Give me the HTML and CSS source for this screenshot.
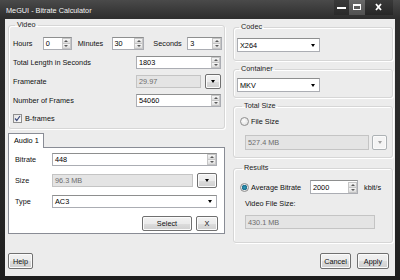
FILE: index.html
```html
<!DOCTYPE html>
<html>
<head>
<meta charset="utf-8">
<link rel="stylesheet" href="styles.css">
</head>
<body>
<div class="window">
  <div class="titlebar">
    <div class="title">MeGUI - Bitrate Calculator</div>
    <div class="caption-btns">
      <div class="cbtn cmin"><svg width="15" height="15" viewBox="0 0 15 15"><rect x="3" y="7" width="9" height="2" fill="#fff"/></svg></div>
      <div class="cbtn cmax"><svg width="16" height="15" viewBox="0 0 16 15"><rect x="4.5" y="4.5" width="7" height="5" fill="none" stroke="#fff"/><rect x="4" y="4" width="8" height="2" fill="#fff"/></svg></div>
      <div class="cbtn cclose"><svg width="28" height="15" viewBox="0 0 28 15"><path d="M11 4 L16 10 M16 4 L11 10" stroke="#fff" stroke-width="1.8" fill="none"/></svg></div>
    </div>
  </div>
  <div class="client">
    <div class="main">
      <div class="col-left">
        <fieldset class="group video">
          <legend>Video</legend>
          <div class="row">
            <span class="lbl l-hours">Hours</span>
            <div class="box w-hours"><span class="val">0</span><span class="spin"><i class="up"></i><i class="dn"></i></span></div>
            <span class="lbl l-min">Minutes</span>
            <div class="box w-min"><span class="val">30</span><span class="spin"><i class="up"></i><i class="dn"></i></span></div>
            <span class="lbl l-sec">Seconds</span>
            <div class="box w-sec"><span class="val">3</span><span class="spin"><i class="up"></i><i class="dn"></i></span></div>
          </div>
          <div class="row">
            <span class="lbl l-wide">Total Length in Seconds</span>
            <div class="box w-field"><span class="val">1803</span><span class="spin"><i class="up"></i><i class="dn"></i></span></div>
          </div>
          <div class="row">
            <span class="lbl l-wide">Framerate</span>
            <div class="box disabled w-fr"><span class="val">29.97</span></div>
            <div class="btn drop w-frbtn"><i class="arrow"></i></div>
          </div>
          <div class="row">
            <span class="lbl l-wide">Number of Frames</span>
            <div class="box w-field"><span class="val">54060</span><span class="spin"><i class="up"></i><i class="dn"></i></span></div>
          </div>
          <div class="row row-check">
            <span class="check"><svg width="9" height="9" viewBox="0 0 9 9"><path d="M2 4.5 L3.8 6.5 L7 2" stroke="#3b4a7a" stroke-width="1.2" fill="none"/></svg></span>
            <span class="lbl">B-frames</span>
          </div>
        </fieldset>
        <div class="tabs">
          <div class="tab-head"><div class="tab active">Audio 1</div></div>
          <div class="tab-panel">
            <div class="row">
              <span class="lbl l-tab">Bitrate</span>
              <div class="box w-tabfield"><span class="val">448</span><span class="spin"><i class="up"></i><i class="dn"></i></span></div>
            </div>
            <div class="row">
              <span class="lbl l-tab">Size</span>
              <div class="box disabled w-size"><span class="val">96.3 MB</span></div>
              <div class="btn drop w-sizebtn"><i class="arrow"></i></div>
            </div>
            <div class="row">
              <span class="lbl l-tab">Type</span>
              <div class="box combo w-tabfield"><span class="val">AC3</span><i class="arrow"></i></div>
            </div>
            <div class="row row-btns">
              <div class="btn w-select">Select</div>
              <div class="btn w-x">X</div>
            </div>
          </div>
        </div>
      </div>
      <div class="col-right">
        <fieldset class="group g-codec">
          <legend>Codec</legend>
          <div class="box combo w-combo"><span class="val">X264</span><i class="arrow"></i></div>
        </fieldset>
        <fieldset class="group g-container">
          <legend>Container</legend>
          <div class="box combo w-combo"><span class="val">MKV</span><i class="arrow"></i></div>
        </fieldset>
        <fieldset class="group g-total">
          <legend>Total Size</legend>
          <div class="row row-radio">
            <span class="radio"></span>
            <span class="lbl">File Size</span>
          </div>
          <div class="row indent">
            <div class="box disabled w-filesize"><span class="val">527.4 MB</span></div>
            <div class="btn drop disabled-btn w-fsbtn"><i class="arrow"></i></div>
          </div>
        </fieldset>
        <fieldset class="group g-results">
          <legend>Results</legend>
          <div class="row row-avg">
            <span class="radio on"></span>
            <span class="lbl l-avg">Average Bitrate</span>
            <div class="box w-avg"><span class="val">2000</span><span class="spin"><i class="up"></i><i class="dn"></i></span></div>
            <span class="lbl l-unit">kbit/s</span>
          </div>
          <div class="vfs-label">Video File Size:</div>
          <div class="row indent">
            <div class="box disabled w-vfs"><span class="val">430.1 MB</span></div>
          </div>
        </fieldset>
      </div>
    </div>
    <div class="footer">
      <div class="btn w-help">Help</div>
      <div class="spacer"></div>
      <div class="btn w-cancel">Cancel</div>
      <div class="btn w-apply">Apply</div>
    </div>
  </div>
</div>
</body>
</html>
```
FILE: styles.css
```css
* { box-sizing: border-box; }
html, body { margin: 0; padding: 0; }
body {
  width: 400px;
  height: 280px;
  overflow: hidden;
  background: #1c1c1c;
  font-family: "Liberation Sans", Arial, sans-serif;
  font-size: 7.3px;
  color: #000;
}
.window {
  width: 400px;
  height: 280px;
  display: flex;
  flex-direction: column;
  background: linear-gradient(#4a4a4a 0px, #2e2e2e 18px, #262626 200px, #1e1e1e 280px);
  padding: 0 5px 4px 5px;
}
.titlebar {
  height: 19px;
  display: flex;
  justify-content: space-between;
  align-items: flex-start;
}
.title {
  color: #f4f4f4;
  line-height: 10px;
  margin: 6px 0 0 1px;
}
.caption-btns {
  display: flex;
  margin-right: 2px;
}
.cbtn { height: 15px; display: flex; }
.cmin { width: 15px; background: linear-gradient(#3a3a3a, #2a2a2a); }
.cmax { width: 16px; background: linear-gradient(#6a6a6a, #505050); }
.cclose { width: 28px; background: linear-gradient(#3a3a3a, #262626); }

.client {
  flex: 1;
  background: #ececec;
  display: flex;
  flex-direction: column;
  padding: 1px 2px 0 3px;
}
.main {
  display: flex;
  align-items: flex-start;
}
.col-left {
  width: 217px;
  display: flex;
  flex-direction: column;
}
.col-right {
  width: 161px;
  margin: 2px 0 0 8px;
  display: flex;
  flex-direction: column;
}

.group {
  margin: 0;
  border: 1px solid #d6d6d6;
  border-radius: 3px;
  box-shadow: inset 1px 1px 0 #fff, 1px 1px 0 #fff;
  padding: 0;
  min-width: 0;
}
.group legend {
  padding: 0 2px;
  margin-left: 2px;
  line-height: 10px;
  color: #222;
}

.row {
  display: flex;
  align-items: center;
  height: 13px;
}
.lbl { white-space: nowrap; color: #111; }

.video {
  padding: 7px 2px 5px 4px;
  display: flex;
  flex-direction: column;
  gap: 6px;
}
.l-hours { width: 30px; }
.l-min { width: 34px; margin-left: 6px; }
.l-sec { width: 34px; margin-left: 9px; }
.w-hours { width: 29px; }
.w-min { width: 33px; }
.w-sec { width: 35px; }
.l-wide { width: 123px; }
.w-field { width: 85px; }
.w-fr { width: 65px; }
.w-frbtn { width: 16px; height: 15px; margin-left: 4px; }
.row-check { height: 10px; }

.box {
  height: 13px;
  border: 1px solid #abadb3;
  border-top-color: #8e8f8f;
  background: #fff;
  display: flex;
  align-items: center;
  padding-left: 2px;
  position: relative;
}
.box .val { flex: 1; white-space: nowrap; }
.box.disabled {
  background: #e4e4e4;
  border-color: #c4c4c4;
  color: #6d6d6d;
}
.spin {
  width: 9px;
  height: 11px;
  display: flex;
  flex-direction: column;
  margin-right: 0;
}
.spin i {
  flex: 1;
  background: linear-gradient(#f6f6f6, #dcdcdc);
  border: 1px solid #c6c6c6;
  display: flex;
  align-items: center;
  justify-content: center;
}
.spin i + i { border-top: 0; }
.spin i::after {
  content: "";
  border-left: 2px solid transparent;
  border-right: 2px solid transparent;
}
.spin .up::after { border-bottom: 2px solid #5a5a5a; }
.spin .dn::after { border-top: 2px solid #5a5a5a; }

.arrow {
  display: block;
  width: 0;
  height: 0;
  border-left: 2.5px solid transparent;
  border-right: 2.5px solid transparent;
  border-top: 3px solid #000;
}
.combo .arrow { margin-right: 4px; }

.btn {
  height: 15px;
  border: 1px solid #707070;
  border-radius: 2px;
  background: linear-gradient(#f2f2f2 0%, #ebebeb 50%, #dddddd 51%, #cfcfcf 100%);
  box-shadow: inset 0 0 0 1px #fbfbfb;
  display: flex;
  align-items: center;
  justify-content: center;
  color: #111;
}
.btn.disabled-btn {
  border-color: #adb2b5;
  background: #f4f4f4;
}
.btn.disabled-btn .arrow { border-top-color: #a0a0a0; }

.check {
  width: 9px;
  height: 9px;
  border: 1px solid #8f8f8f;
  background: linear-gradient(135deg, #e3e3e3, #fbfbfb);
  display: flex;
  margin-right: 3px;
}
.check svg { margin: -1px; }

.radio {
  width: 9px;
  height: 9px;
  border-radius: 50%;
  border: 1px solid #8f8f8f;
  background: radial-gradient(circle at 40% 40%, #fdfdfd, #dadada);
  margin-right: 2px;
}
.radio.on {
  background: radial-gradient(circle, #2f9ab8 0, #1f6f8f 2.5px, #e8e8e8 3px, #dadada 4px);
}

.tabs {
  margin-top: 4px;
  display: flex;
  flex-direction: column;
}
.tab-head {
  display: flex;
  height: 15px;
}
.tab {
  width: 36px;
  height: 15px;
  border: 1px solid #898c95;
  border-bottom: 0;
  background: #fff;
  padding: 2px 0 0 5px;
  line-height: 10px;
  position: relative;
  z-index: 1;
}
.tab-panel {
  margin-top: -1px;
  height: 87px;
  background: #fff;
  border: 1px solid #898c95;
  padding: 5px 6px 5px 6px;
  display: flex;
  flex-direction: column;
  gap: 8px;
}
.l-tab { width: 37px; }
.w-tabfield { width: 165px; }
.w-size { width: 141px; }
.w-sizebtn { width: 20px; height: 15px; margin-left: 4px; }
.row-btns { height: 15px; justify-content: flex-end; gap: 4px; }
.w-select { width: 50px; }
.w-x { width: 22px; }

.g-codec { padding: 6px 3px 8px 3px; }
.w-combo { width: 83px; height: 14px; }
.g-container { margin-top: 3px; padding: 4px 3px 5px 3px; }
.g-total { margin-top: 3px; padding: 5px 3px 7px 6px; }
.row-radio { height: 10px; }
.indent { padding-left: 5px; margin-top: 9px; height: 15px; }
.w-filesize { width: 124px; height: 15px; }
.w-fsbtn { width: 15px; margin-left: 3px; }
.g-results { margin-top: 5px; padding: 7px 3px 13px 6px; }
.row-avg { height: 14px; }
.l-avg { width: 59px; }
.w-avg { width: 48px; height: 14px; }
.l-unit { margin-left: 6px; }
.vfs-label { margin: 5px 0 0 5px; line-height: 10px; color: #111; }
.g-results .indent { margin-top: 6px; height: 14px; }
.w-vfs { width: 130px; height: 14px; }

.footer {
  margin-top: 10px;
  display: flex;
  padding: 0 4px 0 0;
}
.footer .btn { height: 16px; }
.spacer { flex: 1; }
.w-help { width: 25px; }
.w-cancel { width: 31px; }
.w-apply { width: 32px; margin-left: 6px; }
```
